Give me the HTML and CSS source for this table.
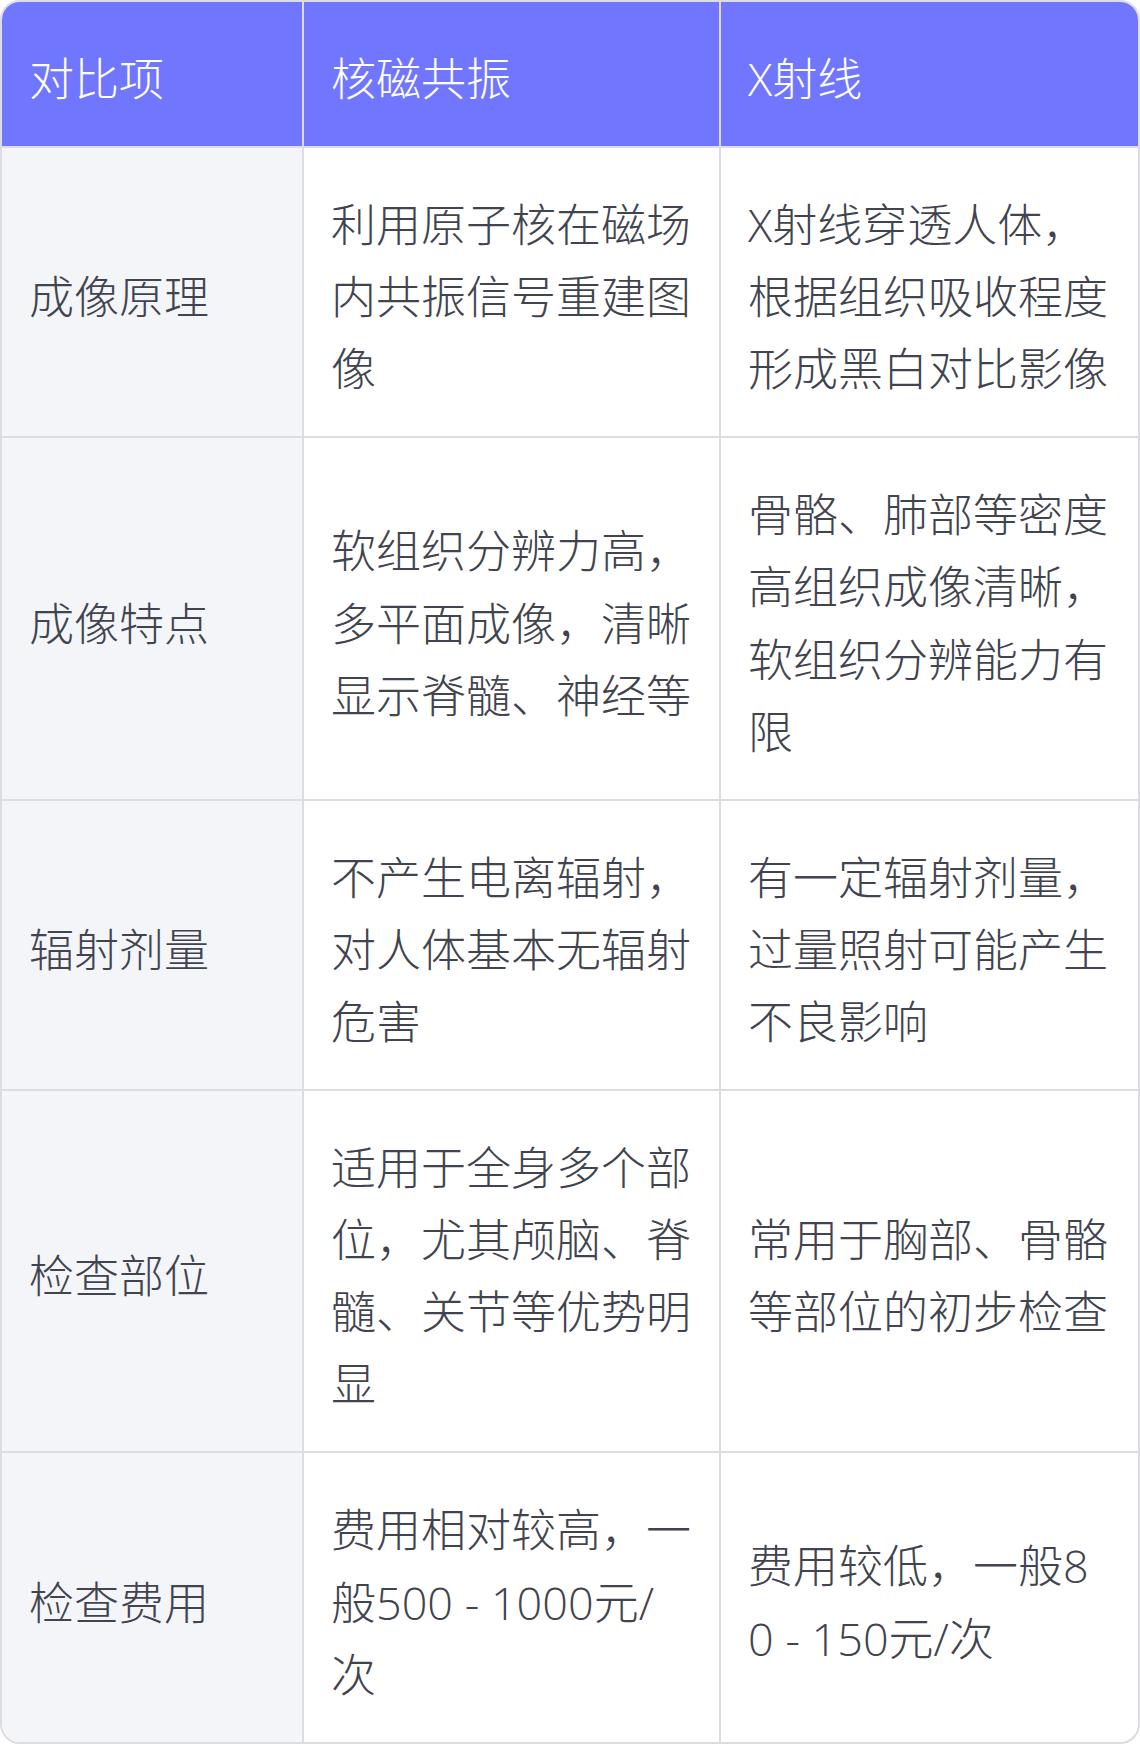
FILE: index.html
```html
<!DOCTYPE html>
<html lang="zh-CN">
<head>
<meta charset="utf-8">
<title>核磁共振与X射线对比</title>
<link rel="stylesheet" href="styles.css">
</head>
<body>
<div class="wrap">
  <table class="cmp">
    <colgroup>
      <col class="c1">
      <col class="c2">
      <col class="c3">
    </colgroup>
    <thead>
      <tr>
        <th>对比项</th>
        <th>核磁共振</th>
        <th>X射线</th>
      </tr>
    </thead>
    <tbody>
      <tr>
        <td class="key">成像原理</td>
        <td>利用原子核在磁场内共振信号重建图像</td>
        <td>X射线穿透人体，根据组织吸收程度形成黑白对比影像</td>
      </tr>
      <tr>
        <td class="key">成像特点</td>
        <td>软组织分辨力高，多平面成像，清晰显示脊髓、神经等</td>
        <td>骨骼、肺部等密度高组织成像清晰，软组织分辨能力有限</td>
      </tr>
      <tr>
        <td class="key">辐射剂量</td>
        <td>不产生电离辐射，对人体基本无辐射危害</td>
        <td>有一定辐射剂量，过量照射可能产生不良影响</td>
      </tr>
      <tr>
        <td class="key">检查部位</td>
        <td>适用于全身多个部位，尤其颅脑、脊髓、关节等优势明显</td>
        <td>常用于胸部、骨骼等部位的初步检查</td>
      </tr>
      <tr>
        <td class="key">检查费用</td>
        <td>费用相对较高，一般500 - 1000元/次</td>
        <td>费用较低，一般80 - 150元/次</td>
      </tr>
    </tbody>
  </table>
</div>
</body>
</html>
```
FILE: styles.css
```css
html, body {
  margin: 0;
  padding: 0;
  background: #ffffff;
}

.wrap {
  width: 1140px;
  box-sizing: border-box;
  border: 2px solid #dcdce2;
  border-radius: 20px;
  overflow: hidden;
  background: #ffffff;
}

.cmp {
  width: 100%;
  border-collapse: separate;
  border-spacing: 0;
  table-layout: fixed;
  font-family: "Open Sans", "Noto Sans CJK SC", "Noto Sans", sans-serif;
  font-weight: 300;
  font-size: 45px;
  line-height: 72.1px;
  color: #41444f;
}

.c1 { width: 302px; }
.c2 { width: 417px; }
.c3 { width: 417px; }

.cmp th,
.cmp td {
  padding: 41px 27px 31px;
  text-align: left;
  vertical-align: middle;
  word-break: break-all;
  border-right: 2px solid #dcdce2;
  border-bottom: 2px solid #dcdce2;
}

.cmp th:last-child,
.cmp td:last-child {
  border-right: none;
}

.cmp tbody tr:last-child td {
  border-bottom: none;
}

.cmp th {
  background: #7176ff;
  color: #ffffff;
  font-weight: 300;
}

.cmp td.key {
  background: #f4f5f9;
}
```
